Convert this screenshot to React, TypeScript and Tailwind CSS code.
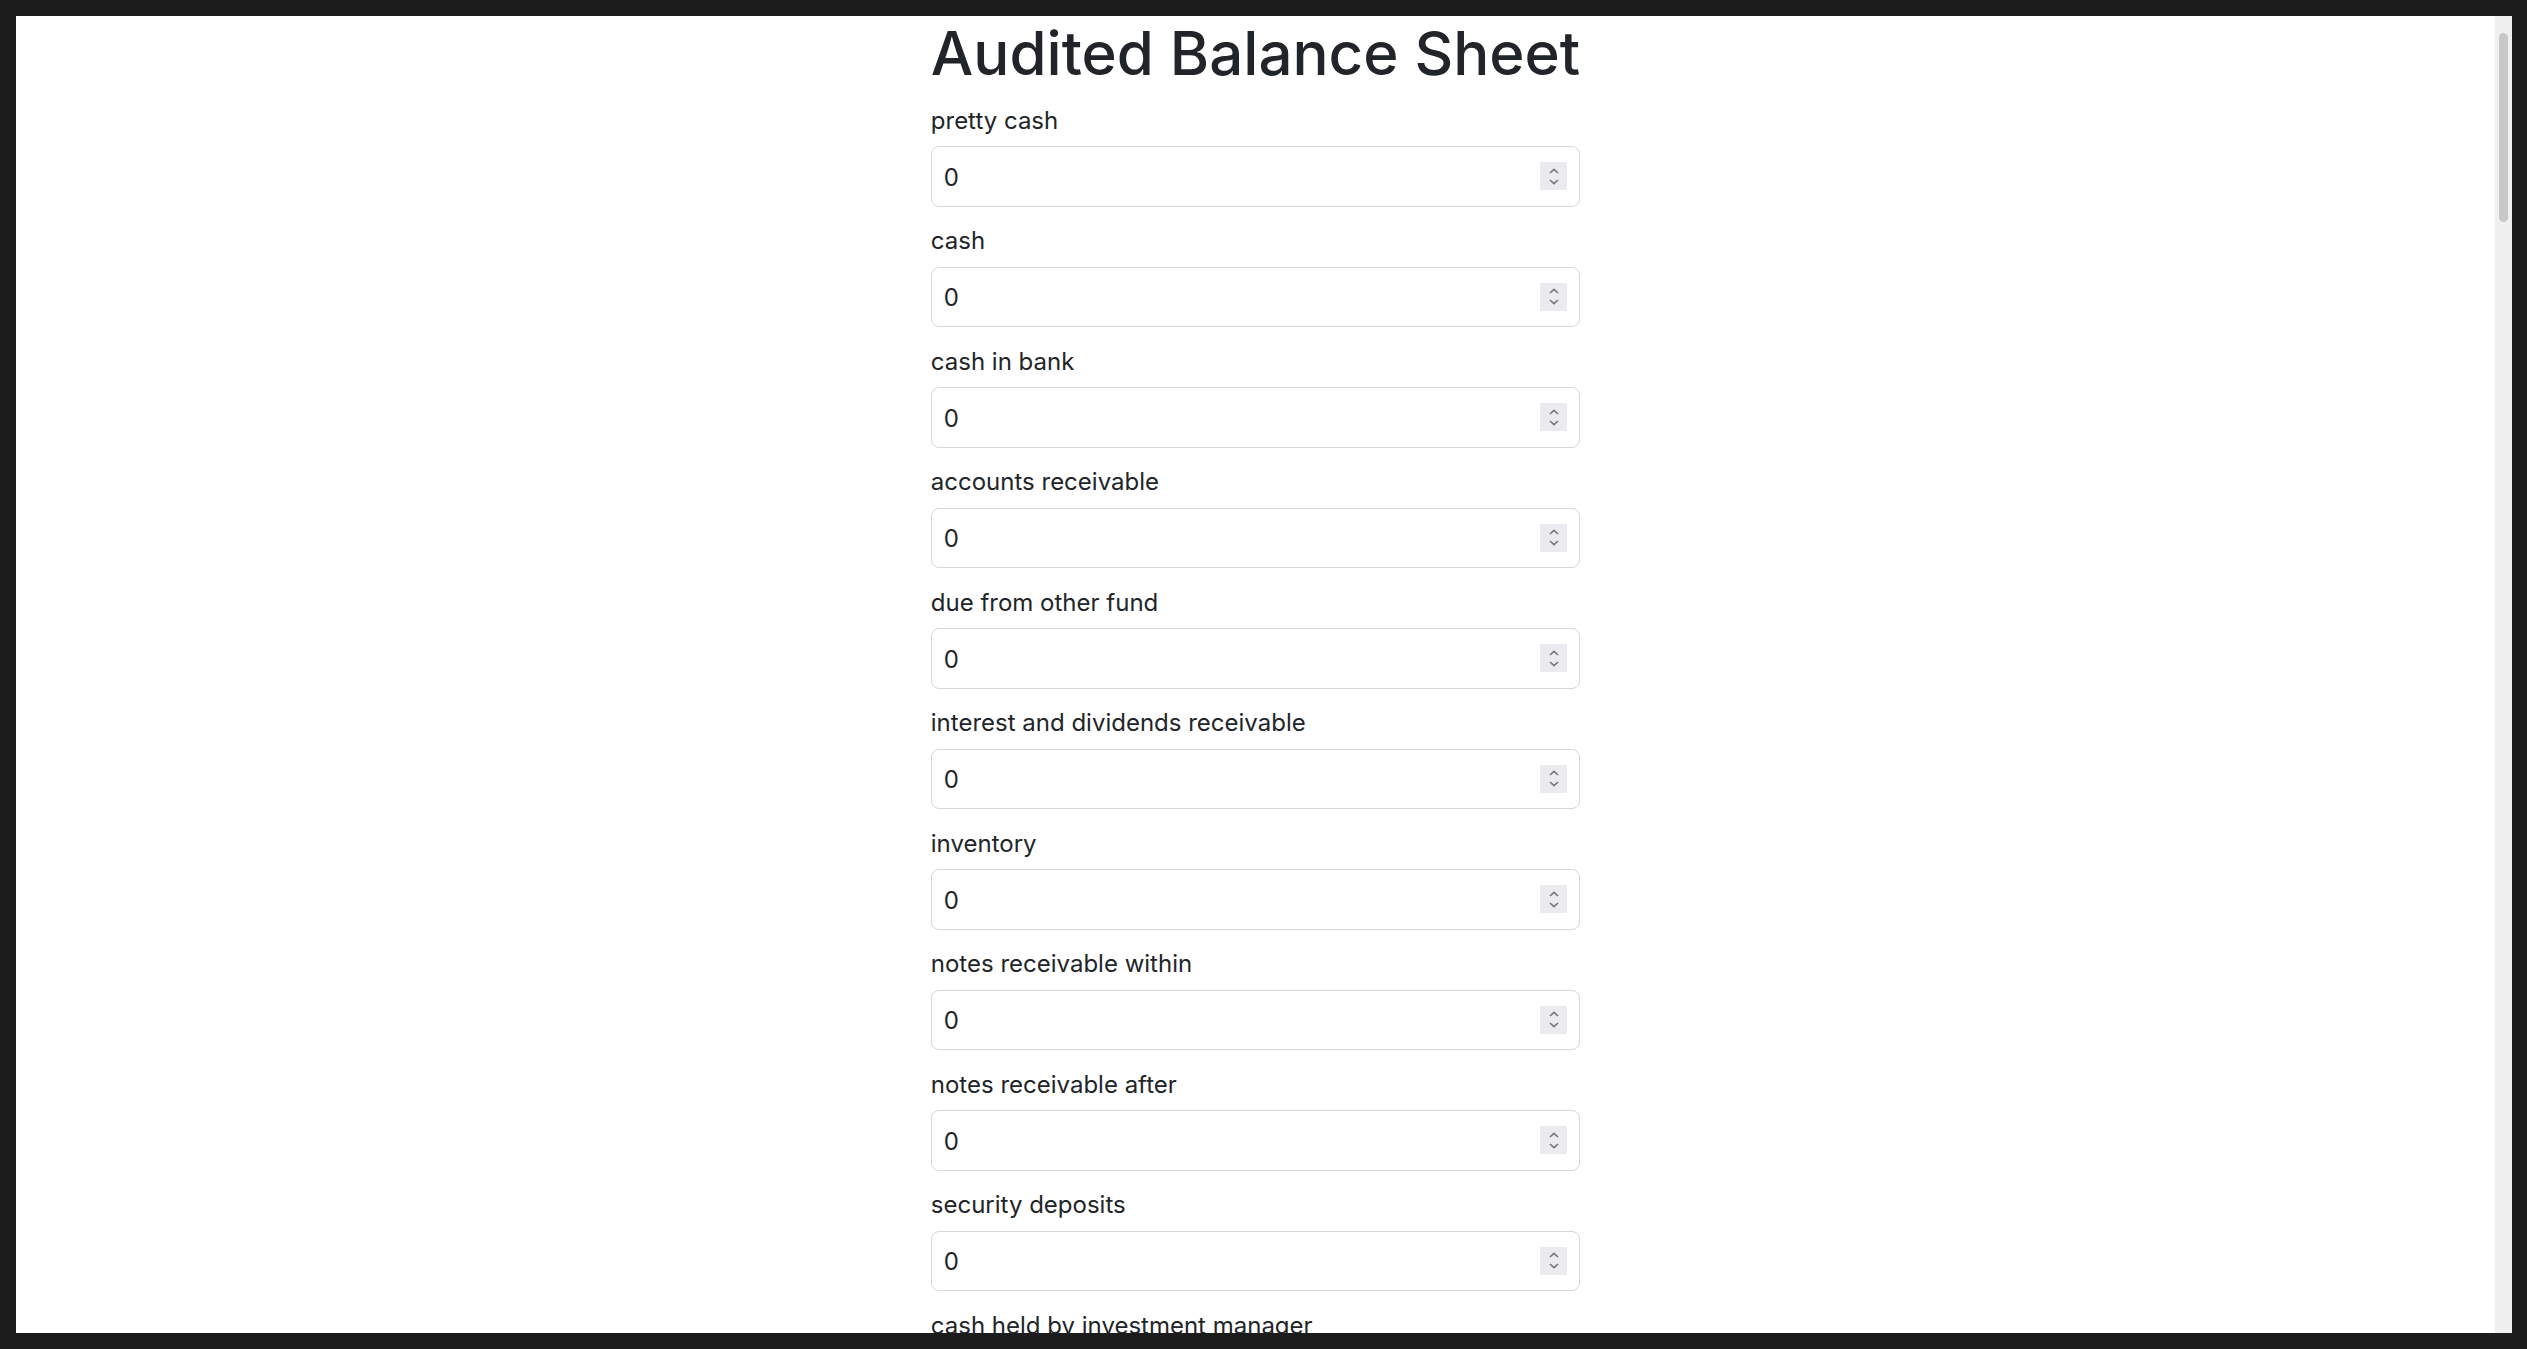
import React from "react";

const FIELDS: string[] = [
  "pretty cash",
  "cash",
  "cash in bank",
  "accounts receivable",
  "due from other fund",
  "interest and dividends receivable",
  "inventory",
  "notes receivable within",
  "notes receivable after",
  "security deposits",
  "cash held by investment manager",
  "investments",
  "investments held by trustee",
  "prepaid expenses",
  "prepaid rent",
  "prepaid insurance",
  "grants receivable",
  "pledges receivable within",
  "pledges receivable after",
  "contributions receivable",
  "allowance for doubtful accounts",
  "deferred charges",
  "land",
  "buildings",
  "building improvements",
  "furniture and equipment",
  "vehicles",
  "computer equipment",
  "leasehold improvements",
  "construction in progress",
  "accumulated depreciation",
  "intangible assets",
  "beneficial interest in trusts",
  "cash surrender value of life insurance",
  "other assets",
  "accounts payable",
  "accrued expenses",
  "accrued salaries",
  "accrued vacation",
  "payroll taxes payable",
  "due to other fund",
  "deferred revenue",
  "refundable advances",
  "line of credit",
  "notes payable within",
  "notes payable after",
  "mortgage payable within",
  "mortgage payable after",
  "capital lease obligations within",
  "capital lease obligations after",
  "bonds payable",
  "interest payable",
  "security deposits held",
  "custodial funds",
  "annuity obligations",
  "deferred rent",
  "loans from officers",
  "other liabilities",
  "unrestricted net assets",
  "board designated net assets",
  "temporarily restricted net assets",
  "permanently restricted net assets",
  "net assets without donor restrictions",
  "net assets with donor restrictions",
  "invested in capital assets",
  "restricted for debt service",
  "restricted for capital projects",
  "restricted for endowment",
  "unassigned fund balance",
  "assigned fund balance",
  "committed fund balance",
  "nonspendable fund balance",
  "total liabilities and net assets",
];

function Spinner() {
  return (
    <div className="flex h-[28px] w-[27px] flex-col items-center justify-center gap-[5px] bg-[#ebebef]">
      <svg width="10" height="6" viewBox="0 0 10 6" fill="none">
        <path d="M1 5L5 1.3L9 5" stroke="#77777b" strokeWidth="1.6" />
      </svg>
      <svg width="10" height="6" viewBox="0 0 10 6" fill="none">
        <path d="M1 1L5 4.7L9 1" stroke="#77777b" strokeWidth="1.6" />
      </svg>
    </div>
  );
}

function Field({ label }: { label: string }) {
  return (
    <div className="mb-[17.5px] flex flex-col">
      <label className="mb-[8px] text-[24px] leading-[34.5px] text-[#212529]">{label}</label>
      <div className="flex h-[60.5px] items-center justify-between rounded-[8px] border border-[#d3d6da] bg-white pl-[12px] pr-[12px]">
        <span className="pt-[3px] text-[24px] leading-[34.5px] text-[#212529]">0</span>
        <Spinner />
      </div>
    </div>
  );
}

export default function App() {
  return (
    <div
      className="flex h-screen w-screen bg-[#1c1c1c] pb-4 pl-4 pr-[15px] pt-4"
      style={{ fontFamily: "Inter, 'Noto Sans', sans-serif" }}
    >
      <div className="h-full flex-1 overflow-y-auto bg-white [scrollbar-width:none]">
        <div className="mx-auto w-fit pb-[40px]">
          <h1 className="mb-[12.5px] text-[60px] font-medium leading-[75px] text-[#212529]">
            Audited Balance Sheet
          </h1>
          <form className="flex flex-col">
            {FIELDS.map((f) => (
              <Field key={f} label={f} />
            ))}
          </form>
        </div>
      </div>
      <div className="flex h-full w-[17px] flex-col bg-[#f0f0f0] px-[4px] pt-[17px]">
        <div className="h-[189px] w-full rounded-full bg-[#c8c8c8]" />
      </div>
    </div>
  );
}
